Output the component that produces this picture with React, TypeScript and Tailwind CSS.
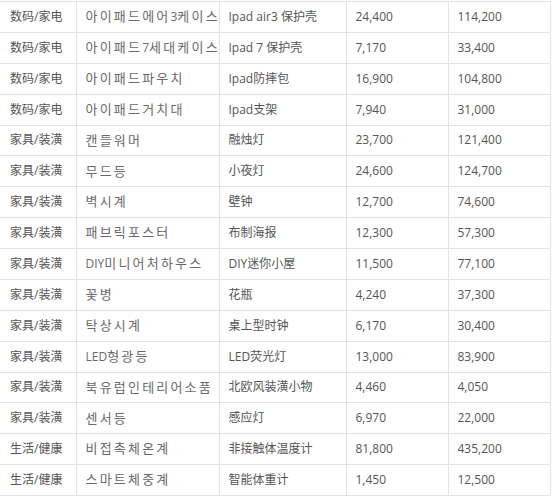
const rows: [string, string, string, string, string][] = [
  ['数码/家电', '아이패드에어3케이스', 'Ipad air3 保护壳', '24,400', '114,200'],
  ['数码/家电', '아이패드7세대케이스', 'Ipad 7 保护壳', '7,170', '33,400'],
  ['数码/家电', '아이패드파우치', 'Ipad防摔包', '16,900', '104,800'],
  ['数码/家电', '아이패드거치대', 'Ipad支架', '7,940', '31,000'],
  ['家具/装潢', '캔들워머', '融烛灯', '23,700', '121,400'],
  ['家具/装潢', '무드등', '小夜灯', '24,600', '124,700'],
  ['家具/装潢', '벽시계', '壁钟', '12,700', '74,600'],
  ['家具/装潢', '패브릭포스터', '布制海报', '12,300', '57,300'],
  ['家具/装潢', 'DIY미니어처하우스', 'DIY迷你小屋', '11,500', '77,100'],
  ['家具/装潢', '꽃병', '花瓶', '4,240', '37,300'],
  ['家具/装潢', '탁상시계', '桌上型时钟', '6,170', '30,400'],
  ['家具/装潢', 'LED형광등', 'LED荧光灯', '13,000', '83,900'],
  ['家具/装潢', '북유럽인테리어소품', '北欧风装潢小物', '4,460', '4,050'],
  ['家具/装潢', '센서등', '感应灯', '6,970', '22,000'],
  ['生活/健康', '비접촉체온계', '非接触体温度计', '81,800', '435,200'],
  ['生活/健康', '스마트체중계', '智能体重计', '1,450', '12,500'],
];

const zh = "font-['Open_Sans','Noto_Sans_CJK_SC',sans-serif]";
const kr = "font-['Open_Sans','Noto_Sans_CJK_KR',sans-serif]";

// Hangul is set wider in the original, Latin parts are not
function Korean({ text }: { text: string }) {
  const parts = text.match(/[\uAC00-\uD7A3]+|[^\uAC00-\uD7A3]+/g) || [];
  return (
    <>
      {parts.map((p, i) =>
        /[\uAC00-\uD7A3]/.test(p) ? (
          <span key={i} className="text-[13px] tracking-[2.2px]">{p}</span>
        ) : (
          <span key={i}>{p}</span>
        )
      )}
    </>
  );
}

export default function App() {
  return (
    <div className="w-[554px] h-[498px] bg-white overflow-hidden pt-px">
      <table className="w-[550px] border-collapse table-fixed text-[12px] text-[#555]">
        <colgroup>
          <col className="w-[76px]" />
          <col className="w-[143px]" />
          <col className="w-[127px]" />
          <col className="w-[102px]" />
          <col className="w-[102px]" />
        </colgroup>
        <tbody>
          {rows.map((r, i) => (
            <tr key={i} className="h-[30.875px]">
              <td className={`border-y border-r border-[#e3e3e3] pl-[10px] ${zh}`}>{r[0]}</td>
              <td className={`border border-[#e3e3e3] pl-[9px] text-[#6a6a6a] whitespace-nowrap ${kr}`}>
                <Korean text={r[1]} />
              </td>
              <td className={`border border-[#e3e3e3] pl-[9px] ${zh}`}>{r[2]}</td>
              <td className={`border border-[#e3e3e3] pl-[9px] ${zh}`}>{r[3]}</td>
              <td className={`border border-[#e3e3e3] pl-[9px] ${zh}`}>{r[4]}</td>
            </tr>
          ))}
        </tbody>
      </table>
    </div>
  );
}
